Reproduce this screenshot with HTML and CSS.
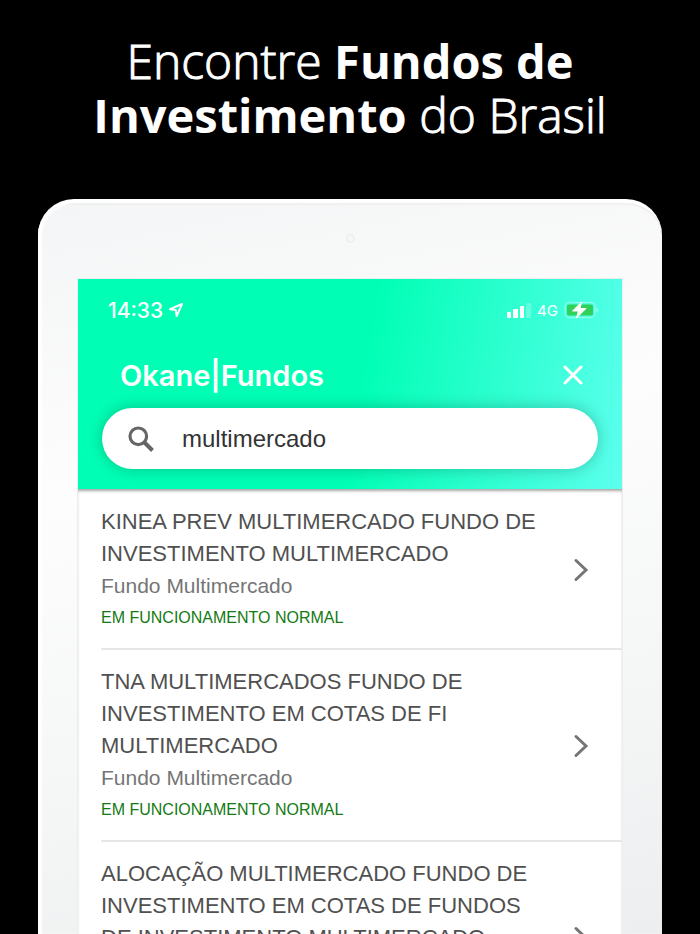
FILE: index.html
```html
<!DOCTYPE html>
<html lang="pt-BR">
<head>
  <title>Okane|Fundos</title>
  <meta charset="UTF-8">
  <meta name="viewport" content="width=device-width, initial-scale=1">
  <link rel="stylesheet" href="styles.css">
</head>
<body>
  <h1 class="headline">Encontre <b>Fundos de<br>Investimento</b> do Brasil</h1>

  <div class="tablet">
    <div class="bezel">
      <span class="camera"></span>
    </div>
    <main class="screen">
      <header class="app-header">
        <div class="status-bar">
          <span class="time">14:33</span>
          <svg class="location" width="16" height="16" viewBox="0 0 16 16" aria-hidden="true">
            <path d="M14 2 2 7.200l5.800.9.900 5.900z" fill="none" stroke="#fff" stroke-width="2" stroke-linejoin="round"/>
          </svg>
          <svg class="signal" width="26" height="16" viewBox="0 0 26 16" aria-hidden="true">
            <rect x="1" y="10" width="4" height="6" rx="1" fill="#fff"/>
            <rect x="7" y="7" width="5" height="9" rx="1" fill="#fff"/>
            <rect x="14" y="4" width="4" height="12" rx="1" fill="#fff"/>
            <rect x="20" y="1" width="5" height="15" rx="1" fill="#fff" fill-opacity=".25"/>
          </svg>
          <span class="network">4G</span>
          <svg class="battery" width="34" height="18" viewBox="0 0 34 18" aria-hidden="true">
            <rect x="1" y="1.5" width="30" height="15" rx="4" fill="none" stroke="#fff" stroke-opacity=".35" stroke-width="1.5"/>
            <path d="M32.5 6.5c2 .7 2 4.300 0 5z" fill="#fff" fill-opacity=".45"/>
            <rect x="3" y="3.500" width="26" height="11" rx="2" fill="#30d158"/>
            <path d="M17.500 1 8.500 10h6l-2 7L22 7.500h-6z" fill="#fff" stroke="#fff" stroke-width="1" stroke-linejoin="round"/>
          </svg>
        </div>
        <div class="title-row">
          <h2>Okane|Fundos</h2>
          <button class="close-btn" type="button" aria-label="Fechar">
            <svg width="20" height="20" viewBox="0 0 20 20" aria-hidden="true">
              <path d="M2 2l16 16M18 2 2 18" stroke="#fff" stroke-width="3" stroke-linecap="round"/>
            </svg>
          </button>
        </div>
        <label class="search">
          <svg width="26" height="26" viewBox="0 0 26 26" aria-hidden="true">
            <circle cx="10.3" cy="10.3" r="8.3" fill="none" stroke="#666" stroke-width="3.2"/>
            <path d="M16 16l8.500 8.500" stroke="#666" stroke-width="4"/>
          </svg>
          <input type="text" value="multimercado" aria-label="Buscar fundos">
        </label>
      </header>

      <ul class="fund-list">
        <li>
          <a href="#" class="fund">
            <span class="fund-info">
              <span class="fund-name">KINEA PREV MULTIMERCADO FUNDO DE<br>INVESTIMENTO MULTIMERCADO</span>
              <span class="fund-type">Fundo Multimercado</span>
              <span class="fund-status">EM FUNCIONAMENTO NORMAL</span>
            </span>
            <svg class="chevron" width="16" height="24" viewBox="0 0 16 24" aria-hidden="true"><path d="M3 2.500 13 12 3 21.500"/></svg>
          </a>
        </li>
        <li>
          <a href="#" class="fund">
            <span class="fund-info">
              <span class="fund-name">TNA MULTIMERCADOS FUNDO DE<br>INVESTIMENTO EM COTAS DE FI<br>MULTIMERCADO</span>
              <span class="fund-type">Fundo Multimercado</span>
              <span class="fund-status">EM FUNCIONAMENTO NORMAL</span>
            </span>
            <svg class="chevron" width="16" height="24" viewBox="0 0 16 24" aria-hidden="true"><path d="M3 2.500 13 12 3 21.500"/></svg>
          </a>
        </li>
        <li>
          <a href="#" class="fund">
            <span class="fund-info">
              <span class="fund-name">ALOCAÇÃO MULTIMERCADO FUNDO DE<br>INVESTIMENTO EM COTAS DE FUNDOS<br>DE INVESTIMENTO MULTIMERCADO</span>
              <span class="fund-type">Fundo Multimercado</span>
              <span class="fund-status">EM FUNCIONAMENTO NORMAL</span>
            </span>
            <svg class="chevron" width="16" height="24" viewBox="0 0 16 24" aria-hidden="true"><path d="M3 2.500 13 12 3 21.500"/></svg>
          </a>
        </li>
      </ul>
    </main>
  </div>
</body>
</html>
```

FILE: styles.css
```css
* {
  box-sizing: border-box;
}
body {
  display: flex;
  flex-direction: column;
  height: 100vh;
  margin: 0;
  padding: 34px 38px 0;
  overflow: hidden;
  background-color: #000;
  font-family: "Liberation Sans", Arial, Helvetica, sans-serif;
}
.headline {
  margin: 0 0 57px;
  color: #fff;
  font-family: "Open Sans", sans-serif;
  font-size: 48px;
  font-weight: 300;
  line-height: 53px;
  text-align: center;
  white-space: nowrap;
  -webkit-text-stroke: 1px #fff;
}
.headline b {
  font-size: 47px;
  font-weight: 700;
  -webkit-text-stroke: 0;
}

/* tablet frame */
.tablet {
  flex: 1;
  min-height: 0;
  padding: 0 40px;
  overflow: hidden;
  border: solid #fff;
  border-width: 4px 0 0;
  border-radius: 36px 36px 0 0;
  background: linear-gradient(168deg, #f4f5f6 0%, #fdfdfd 35%, #f6f7f7 65%, #edeeef 100%);
  box-shadow: inset 4px 0 2px #fff, inset 0 1px 2px #e4e4e4;
}
.bezel {
  display: flex;
  align-items: center;
  justify-content: center;
  height: 76px;
  padding-bottom: 6px;
}
.camera {
  width: 9px;
  height: 9px;
  border: 2px solid #eeefef;
  border-radius: 50%;
  background-color: #f8f8f8;
}
.screen {
  background-color: #fff;
  box-shadow: 0 0 0 1px #ededee;
}

/* header */
.app-header {
  padding: 15px 24px 20px;
  background: linear-gradient(100deg, #00ffb5 0%, #00ffb5 52%, #5cffed 100%);
}
.status-bar {
  display: flex;
  align-items: center;
  height: 32px;
  padding-left: 6px;
  color: #fff;
  font-family: Inter, sans-serif;
}
.time {
  font-size: 21px;
  font-weight: 500;
}
.location {
  margin-left: 5px;
}
.signal {
  margin-left: auto;
}
.network {
  margin: 0 6px 0 5px;
  font-size: 15px;
  font-weight: 400;
}
.title-row {
  display: flex;
  align-items: center;
  justify-content: space-between;
  height: 48px;
  margin-top: 25px;
  padding: 0 15px 0 18px;
}
.title-row h2 {
  margin: 0;
  color: #fff;
  font-family: Inter, sans-serif;
  font-size: 29px;
  font-weight: 600;
}
.close-btn {
  display: flex;
  padding: 0;
  border: none;
  background: none;
  cursor: pointer;
}
.search {
  display: flex;
  align-items: center;
  gap: 28px;
  height: 61px;
  margin-top: 9px;
  padding: 0 26px;
  border-radius: 31px;
  background-color: #fff;
  box-shadow: 0 0 16px rgba(0, 0, 0, 0.24);
}
.search input {
  flex: 1;
  min-width: 0;
  padding: 0;
  border: none;
  outline: none;
  background: none;
  color: #333;
  font-family: inherit;
  font-size: 24px;
}

/* results */
.fund-list {
  margin: 0;
  padding: 1px 0 0 23px;
  list-style: none;
  box-shadow: inset 0 3px 3px -1px rgba(0, 0, 0, 0.35);
}
.fund {
  display: flex;
  align-items: center;
  justify-content: space-between;
  padding: 16px 33px 14px 0;
  border-bottom: 2px solid #e6e6e6;
  color: #505050;
  text-decoration: none;
}
.fund-info span {
  display: block;
  line-height: 32px;
  white-space: nowrap;
}
.fund-info .fund-name {
  font-size: 22px;
}
.fund-info .fund-type {
  color: #757575;
  font-size: 21px;
}
.fund-info .fund-status {
  color: #137a13;
  font-size: 16px;
}
.chevron {
  flex: none;
  fill: none;
  stroke: #757575;
  stroke-width: 3;
  stroke-linecap: round;
}
```
